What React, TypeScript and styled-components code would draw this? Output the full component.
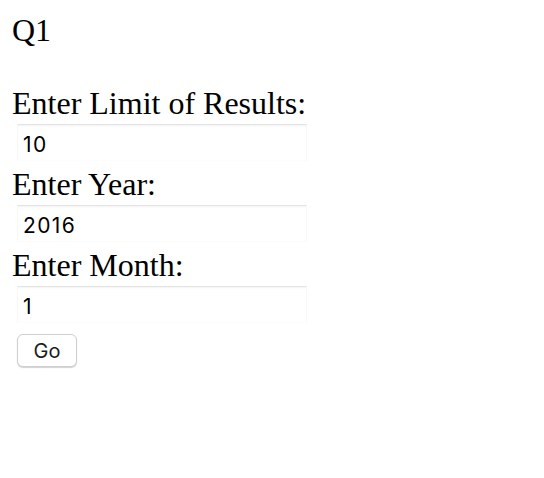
import React from "react";
import styled, { createGlobalStyle } from "styled-components";

const GlobalStyle = createGlobalStyle`
  html, body { margin: 0; padding: 0; background: #ffffff; }
`;

const Page = styled.div`
  padding: 12px;
  font-family: "Liberation Serif", "Times New Roman", serif;
  font-size: 32px;
  line-height: 37px;
  color: #000;
`;

const Title = styled.div`
  margin-bottom: 36px;
`;

const Form = styled.form`
  display: flex;
  flex-direction: column;
  align-items: flex-start;
`;

const Label = styled.label`
  display: block;
  white-space: nowrap;
`;

const Input = styled.input`
  box-sizing: border-box;
  width: 290px;
  height: 37px;
  margin: 2px 0 5px 5px;
  padding: 3px 5px 0;
  border: 1px solid #f8f8f8;
  border-top-color: #e4e4e4;
  border-bottom-color: #fcfcfc;
  border-radius: 0;
  box-shadow: inset 0 2px 2px -1px rgba(0, 0, 0, 0.05);
  background: #fff;
  font-family: Inter, "Liberation Sans", sans-serif;
  font-size: 21px;
  letter-spacing: 1.4px;
  color: #000;
  outline: none;
`;

const Button = styled.button`
  box-sizing: border-box;
  width: 60px;
  height: 33px;
  margin: 6px 0 0 5px;
  padding: 0;
  border: 1px solid #cfcfcf;
  border-radius: 6px;
  background: #fff;
  box-shadow: 0 1px 1px rgba(0, 0, 0, 0.18);
  font-family: Inter, "Liberation Sans", sans-serif;
  font-size: 20px;
  color: #1c1c1c;
  cursor: pointer;
`;

const fields = [
  { id: "limit", label: "Enter Limit of Results:", value: "10" },
  { id: "year", label: "Enter Year:", value: "2016" },
  { id: "month", label: "Enter Month:", value: "1" },
];

export default function App() {
  return (
    <>
      <GlobalStyle />
      <Page>
        <Title>Q1</Title>
        <Form onSubmit={(e) => e.preventDefault()}>
          {fields.map((f) => (
            <React.Fragment key={f.id}>
              <Label htmlFor={f.id}>{f.label}</Label>
              <Input id={f.id} type="text" defaultValue={f.value} />
            </React.Fragment>
          ))}
          <Button type="submit">Go</Button>
        </Form>
      </Page>
    </>
  );
}
